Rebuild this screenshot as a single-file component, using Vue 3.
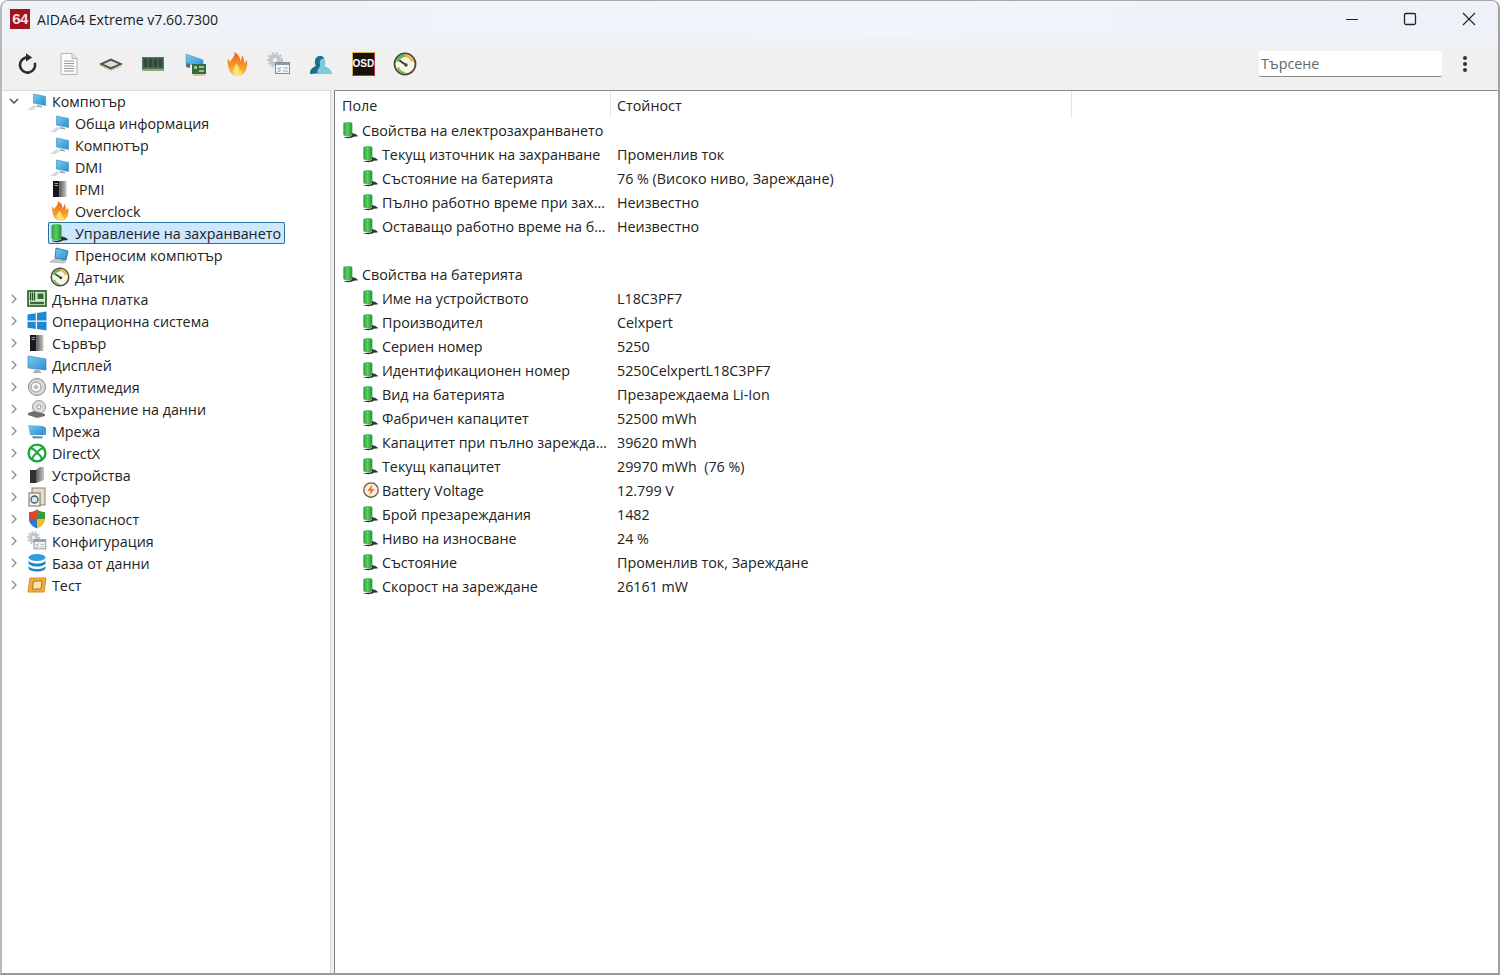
<script setup>
const tools = ['refresh', 'doc', 'chip', 'ram', 'card', 'fire', 'cfg', 'user', 'osd', 'gauge']

const sub = [
  { label: 'Обща информация', icon: 'pc' },
  { label: 'Компютър', icon: 'pc' },
  { label: 'DMI', icon: 'pc' },
  { label: 'IPMI', icon: 'server' },
  { label: 'Overclock', icon: 'fire' },
  { label: 'Управление на захранването', icon: 'batt', selected: true },
  { label: 'Преносим компютър', icon: 'laptop' },
  { label: 'Датчик', icon: 'gauge' }
]

const top = [
  { label: 'Дънна платка', icon: 'board' },
  { label: 'Операционна система', icon: 'win' },
  { label: 'Сървър', icon: 'server' },
  { label: 'Дисплей', icon: 'display' },
  { label: 'Мултимедия', icon: 'media' },
  { label: 'Съхранение на данни', icon: 'disk' },
  { label: 'Мрежа', icon: 'net' },
  { label: 'DirectX', icon: 'xbox' },
  { label: 'Устройства', icon: 'device' },
  { label: 'Софтуер', icon: 'soft' },
  { label: 'Безопасност', icon: 'shield' },
  { label: 'Конфигурация', icon: 'cfg' },
  { label: 'База от данни', icon: 'db' },
  { label: 'Тест', icon: 'test' }
]

const rows = [
  { field: 'Свойства на електрозахранването', group: true },
  { field: 'Текущ източник на захранване', value: 'Променлив ток' },
  { field: 'Състояние на батерията', value: '76 % (Високо ниво, Зареждане)' },
  { field: 'Пълно работно време при зах…', value: 'Неизвестно' },
  { field: 'Оставащо работно време на б…', value: 'Неизвестно' },
  { spacer: true },
  { field: 'Свойства на батерията', group: true },
  { field: 'Име на устройството', value: 'L18C3PF7' },
  { field: 'Производител', value: 'Celxpert' },
  { field: 'Сериен номер', value: '5250' },
  { field: 'Идентификационен номер', value: '5250CelxpertL18C3PF7' },
  { field: 'Вид на батерията', value: 'Презареждаема Li-Ion' },
  { field: 'Фабричен капацитет', value: '52500 mWh' },
  { field: 'Капацитет при пълно зарежда…', value: '39620 mWh' },
  { field: 'Текущ капацитет', value: '29970 mWh  (76 %)' },
  { field: 'Battery Voltage', value: '12.799 V', icon: 'volt' },
  { field: 'Брой презареждания', value: '1482' },
  { field: 'Ниво на износване', value: '24 %' },
  { field: 'Състояние', value: 'Променлив ток, Зареждане' },
  { field: 'Скорост на зареждане', value: '26161 mW' }
]
</script>

<template>
  <div class="window">
    <svg class="defs" aria-hidden="true">
      <defs>
        <linearGradient id="gGreen" x1="0" x2="1" y1="0" y2="0">
          <stop offset="0" stop-color="#2c9a42" />
          <stop offset=".45" stop-color="#5ccf58" />
          <stop offset="1" stop-color="#22903c" />
        </linearGradient>
        <linearGradient id="gBlue" x1="0" x2="1" y1="0" y2="1">
          <stop offset="0" stop-color="#78ccf4" />
          <stop offset="1" stop-color="#2a8fd0" />
        </linearGradient>
        <linearGradient id="gFire" x1="0" x2="0" y1="0" y2="1">
          <stop offset="0" stop-color="#e8601f" />
          <stop offset=".6" stop-color="#f79a28" />
          <stop offset="1" stop-color="#ffc648" />
        </linearGradient>
        <linearGradient id="gGrey" x1="0" x2="1" y1="0" y2="0">
          <stop offset="0" stop-color="#5a5a5a" />
          <stop offset="1" stop-color="#c9c9c9" />
        </linearGradient>
      </defs>
      <symbol id="refresh" viewBox="0 0 24 24">
        <path d="M12.6 5.4a7.6 7.6 0 1 0 7.2 5.4" fill="none" stroke="#2b2b2b" stroke-width="2.6" />
        <path d="M11 1.2l6.2 4.2L11 9.6z" fill="#2b2b2b" />
      </symbol>
      <symbol id="doc" viewBox="0 0 24 24">
        <path d="M4 1.500h11l5 5v16H4z" fill="#fafafa" stroke="#b4b4b4" />
        <path d="M15 1.500v5h5" fill="#e4e4e4" stroke="#b4b4b4" />
        <path d="M7 9h10M7 11.500h10M7 14h10M7 16.500h10M7 19h10" stroke="#9a9a9a" />
      </symbol>
      <symbol id="chip" viewBox="0 0 24 24">
        <path d="M0 12L12 6.500 24 12 12 17.500z" fill="#3f5a46" />
        <path d="M4.500 12L12 8.700l7.500 3.300L12 15.300z" fill="#e2e0d2" />
        <path d="M1 13.500l11 5 11-5" fill="none" stroke="#8f8f74" stroke-dasharray="1 1" />
      </symbol>
      <symbol id="ram" viewBox="0 0 24 24">
        <rect x="1" y="5" width="22" height="14" fill="#4c7a5c" />
        <path d="M2.500 6.500h4v9h-4zM7.500 6.500h4v9h-4zM12.500 6.500h4v9h-4zM17.500 6.500h4v9h-4z" fill="#37463d" />
        <path d="M1 18h22" stroke="#a8b878" stroke-width="1.500" />
      </symbol>
      <symbol id="card" viewBox="0 0 24 24">
        <path d="M3 2l17 6v8L3 11z" fill="url(#gBlue)" stroke="#3a86b8" stroke-width=".5" />
        <path d="M3 11v4l4 1v-4z" fill="#5a6a7a" />
        <rect x="9" y="12" width="14" height="10" fill="#2f6f48" />
        <path d="M11 14h3v3h-3zM16 14h5v2h-5zM16 18h5v2h-5z" fill="#a6b87e" />
        <path d="M10 23h12" stroke="#d6b85c" stroke-width="1.500" />
      </symbol>
      <symbol id="fire" viewBox="0 0 24 24">
        <path d="M9 0c2 4-2 6-4 10-.5-1-1-2-2.500-3 .5 7 .5 16 9.500 17 8 0 11-7 10-16-1 1.500-2 2.500-3 3 .5-3-.5-5-2-8 0 3-1 5-2 6 .5-4-2-7-6-9z" fill="url(#gFire)" />
        <path d="M11 11c0 3-3 5-3 8 0 3 2 5 4.500 5s5-3 4-6c-.5 1-1 1.500-2 2 .5-3-1-6-3.500-9z" fill="#ffe27a" />
      </symbol>
      <symbol id="cfg" viewBox="0 0 24 24">
        <circle cx="8" cy="8" r="6" fill="#c2c4c8" />
        <circle cx="8" cy="8" r="7" fill="none" stroke="#c2c4c8" stroke-width="2" stroke-dasharray="2.200 2" />
        <circle cx="8" cy="8" r="2.200" fill="#eee" />
        <rect x="8.500" y="10.500" width="14" height="11" fill="#f6f8fa" stroke="#7d8a96" />
        <rect x="8.500" y="10.500" width="14" height="2.500" fill="#8b9aa8" />
        <path d="M10.500 16l1.300 1.300 2-2.300M10.500 20l1.300-.5 2-1.500" fill="none" stroke="#4aa0c8" />
        <path d="M16 16h5M16 19h5" stroke="#a0a8b0" />
      </symbol>
      <symbol id="user" viewBox="0 0 24 24">
        <path d="M1 22c0-6 4-7 6-8-2-3-1.500-10 4-10 6 0 6 7 4.500 10 2 1 6.500 2 7.500 8z" fill="#7ccbdd" />
        <path d="M9 21c-2-3 1.500-5 2-7 .5-2-1-3 0-5 .5-1.500 2-2.500 4-3-1-1.500-2.500-2-4-2-5.500 0-6 7-4 10-2 1-6 2-6 8z" fill="#16718a" />
      </symbol>
      <symbol id="gauge" viewBox="0 0 24 24">
        <circle cx="12" cy="12" r="10.500" fill="#fbf6e2" stroke="#4c4a3e" stroke-width="1.800" />
        <path d="M3 9a10 10 0 0 1 9-7v3a7 7 0 0 0-6 5z" fill="#5cb85c" />
        <path d="M12 2a10 10 0 0 1 9 7l-3 1a7 7 0 0 0-6-5z" fill="#e8b84c" />
        <path d="M4 16a9 9 0 0 0 8 6v-2a7 7 0 0 1-6-5z" fill="#70bc5c" />
        <path d="M6.500 8.500L13 13" stroke="#334" stroke-width="1.800" />
        <circle cx="13" cy="13" r="1.700" fill="#39424e" />
      </symbol>
      <symbol id="pc" viewBox="0 0 20 20">
        <path d="M0 19l6-4.500h5L6 19z" fill="#d8dadd" />
        <path d="M6.500 3l12 2.500v9l-12-2.500z" fill="url(#gBlue)" stroke="#3a86b8" stroke-width=".6" />
        <path d="M10 14l5 1v1.500l-5-.8z" fill="#9aa6b0" />
      </symbol>
      <symbol id="laptop" viewBox="0 0 20 20">
        <path d="M6 3l12 3-2 9-11-2z" fill="url(#gBlue)" stroke="#2b5f88" stroke-width=".8" />
        <path d="M0 17l4-3 12 2-2 2z" fill="#c8ccd2" stroke="#8a9098" stroke-width=".5" />
      </symbol>
      <symbol id="server" viewBox="0 0 20 20">
        <rect x="3" y="2" width="6.500" height="16" fill="#15181e" />
        <rect x="9.500" y="2" width="7" height="16" fill="url(#gGrey)" />
        <path d="M4.500 4.500h3.500M4.500 6.500h3.500" stroke="#7aa6d8" />
      </symbol>
      <symbol id="batt" viewBox="0 0 20 20">
        <path d="M11 13.500c3 0 6 1.500 7 3.500l-5 .5c-1.500 1-4 2-8 1.500-2-.3-3-1-3.500-1.500 3 .5 7 .5 9.500-1z" fill="#26362a" />
        <path d="M1.500 3Q1.500 1 6.500 1T11.500 3V15q0 2-5 2T1.500 15z" fill="url(#gGreen)" />
      </symbol>
      <symbol id="volt" viewBox="0 0 20 20">
        <circle cx="10" cy="10" r="8" fill="#fbf0de" stroke="#6c5a48" stroke-width="1.500" />
        <path d="M11.500 3.500L6 11h3.500L8 16.500 14 9h-3.500z" fill="#e8791e" />
      </symbol>
      <symbol id="board" viewBox="0 0 20 20">
        <rect x="1" y="2" width="18" height="15" fill="#dce8c8" stroke="#2f6e38" stroke-width="1.800" />
        <path d="M3.500 3.500v8M5.500 3.500v8M7.500 3.500v8" stroke="#24502c" stroke-width="1.300" />
        <rect x="10.500" y="4.500" width="6" height="5.500" fill="#2f6e38" />
        <path d="M3 14h14" stroke="#2f6e38" stroke-width="2.400" />
      </symbol>
      <symbol id="win" viewBox="0 0 20 20">
        <path d="M.5 3.500L8.800 2.200v7.300H.5zM10 2L19.500 .6v8.900H10zM.5 10.700h8.300v7.300L.5 16.800zM10 10.700h9.500v8.800L10 18.100z" fill="#1a8ad4" />
      </symbol>
      <symbol id="display" viewBox="0 0 20 20">
        <path d="M1 1l18 3v11L1 13z" fill="url(#gBlue)" stroke="#2a7ab0" stroke-width=".6" />
        <path d="M8 14.500l4 .5 3 3H6z" fill="#a8b0b8" />
      </symbol>
      <symbol id="media" viewBox="0 0 20 20">
        <circle cx="10" cy="10" r="8.500" fill="#d9d9d9" stroke="#8a8a8a" />
        <circle cx="9" cy="10" r="5" fill="#f6f6f6" stroke="#9a9a9a" />
        <circle cx="9" cy="10" r="2" fill="#b4b4b4" />
      </symbol>
      <symbol id="disk" viewBox="0 0 20 20">
        <circle cx="12" cy="8" r="6.500" fill="#dcdcdc" stroke="#9a9a9a" />
        <circle cx="12" cy="8" r="2" fill="#f8f8f8" stroke="#a0a0a0" />
        <path d="M1 14l6-2 11 3v2l-8 2-9-3z" fill="#6e6e6e" />
      </symbol>
      <symbol id="net" viewBox="0 0 20 20">
        <path d="M1 4l15 1v9L3 14z" fill="url(#gBlue)" />
        <path d="M16 5l3 2v7l-3 0z" fill="#4a9ccc" />
        <path d="M5 15l11 .5-1 2H6z" fill="#7a8a96" />
      </symbol>
      <symbol id="xbox" viewBox="0 0 20 20">
        <circle cx="10" cy="10" r="8.400" fill="#fff" stroke="#19a83c" stroke-width="2.400" />
        <path d="M4 5Q8 6.500 10 9.500 12 6.500 16 5M5 16Q6 12.500 10 9.500 14 12.500 15 16" fill="none" stroke="#19a83c" stroke-width="2.100" />
      </symbol>
      <symbol id="device" viewBox="0 0 20 20">
        <rect x="3" y="5" width="6" height="13" fill="#30302e" />
        <path d="M9 5l4-3h4v13l-8 3z" fill="url(#gGrey)" />
      </symbol>
      <symbol id="soft" viewBox="0 0 20 20">
        <rect x="5" y="1" width="13" height="17" fill="#e6dcc2" stroke="#8a8470" />
        <rect x="2" y="6" width="11" height="13" fill="#f4f4f4" stroke="#6a6a6a" />
        <circle cx="7.500" cy="12.500" r="3.500" fill="#dfe6ec" stroke="#465564" stroke-width="1.300" />
      </symbol>
      <symbol id="shield" viewBox="0 0 20 20">
        <path d="M10 .5C7 2.500 4.500 3 2 3v7h8z" fill="#d94a2a" />
        <path d="M10 .5c3 2 5.500 2.500 8 2.500v7h-8z" fill="#3a9a3e" />
        <path d="M2 10h8v9.500C5 17.500 2 14 2 10z" fill="#2a7ad0" />
        <path d="M10 10h8c0 4-3 7.500-8 9.500z" fill="#f0c02a" />
      </symbol>
      <symbol id="db" viewBox="0 0 20 20">
        <ellipse cx="10" cy="4.500" rx="8.500" ry="3.500" fill="#2f9edc" />
        <path d="M1.500 7c0 2 4 3.500 8.500 3.500S18.500 9 18.500 7v3c0 2-4 3.500-8.500 3.500S1.500 12 1.500 10z" fill="#1f86c6" />
        <path d="M1.500 12.500c0 2 4 3.500 8.500 3.500s8.500-1.500 8.500-3.500v2.500c0 2-4 3.500-8.500 3.500S1.500 17 1.500 15z" fill="#1f86c6" />
      </symbol>
      <symbol id="test" viewBox="0 0 20 20">
        <path d="M3 3h16l-2 14H1z" fill="#f4ac3c" stroke="#d88a1e" />
        <path d="M6.500 6h8.500l-1 8H5.500z" fill="#fbe6a8" stroke="#a87420" />
      </symbol>
    </svg>

    <header class="titlebar">
      <div class="logo">64</div>
      <span class="title">AIDA64 Extreme v7.60.7300</span>
      <div class="winbtns">
        <svg class="winbtn" viewBox="0 0 58 36"><path d="M22 18.500h12" stroke="#222" stroke-width="1.100" /></svg>
        <svg class="winbtn" viewBox="0 0 58 36"><rect x="22.500" y="12.500" width="11" height="11" rx="1.500" fill="none" stroke="#222" stroke-width="1.300" /></svg>
        <svg class="winbtn" viewBox="0 0 58 36"><path d="M23 12l12 12M35 12L23 24" stroke="#222" stroke-width="1.100" /></svg>
      </div>
    </header>

    <div class="toolbar">
      <div v-for="t in tools" :key="t" class="tool">
        <div v-if="t === 'osd'" class="osd">OSD</div>
        <svg v-else class="toolicon"><use :href="'#' + t" /></svg>
      </div>
      <input class="search" placeholder="Търсене" />
      <div class="kebab"><i></i><i></i><i></i></div>
    </div>

    <main class="body">
      <nav class="tree">
        <div class="node">
          <svg class="chev" viewBox="0 0 10 10"><path d="M1 3l4 4 4-4" fill="none" stroke="#444" stroke-width="1.300" /></svg>
          <svg class="ticon"><use href="#pc" /></svg>
          <span class="nlabel">Компютър</span>
        </div>
        <div v-for="n in sub" :key="n.label" class="node child" :class="{ selected: n.selected }">
          <svg class="ticon"><use :href="'#' + n.icon" /></svg>
          <span class="nlabel">{{ n.label }}</span>
        </div>
        <div v-for="n in top" :key="n.label" class="node">
          <svg class="chev" viewBox="0 0 10 10"><path d="M3 1l4 4-4 4" fill="none" stroke="#8a8a8a" stroke-width="1.300" /></svg>
          <svg class="ticon"><use :href="'#' + n.icon" /></svg>
          <span class="nlabel">{{ n.label }}</span>
        </div>
      </nav>

      <section class="list">
        <div class="head">
          <div class="col c1">Поле</div>
          <div class="col c2">Стойност</div>
        </div>
        <div class="rows">
          <template v-for="(r, i) in rows" :key="i">
            <div v-if="r.spacer" class="row"></div>
            <div v-else class="row" :class="{ group: r.group }">
              <div class="field">
                <svg class="licon"><use :href="'#' + (r.icon || 'batt')" /></svg>
                <span>{{ r.field }}</span>
              </div>
              <div class="value">{{ r.value }}</div>
            </div>
          </template>
        </div>
      </section>
    </main>
  </div>
</template>

<style scoped>
.window {
  width: 1500px;
  height: 975px;
  box-sizing: border-box;
  border-style: solid;
  border-width: 1px 2px 2px 2px;
  border-color: #a8a8a8 #a0a0a0 #999 #b8b8b8;
  border-radius: 8px 8px 0 0;
  display: flex;
  flex-direction: column;
  overflow: hidden;
  background: #f0f0f0;
  color: #222;
  font-family: "Open Sans", "Noto Sans", sans-serif;
  font-size: 14.3px;
}
.defs {
  display: block;
  width: 0;
  height: 0;
}
.titlebar {
  height: 36px;
  flex: none;
  display: flex;
  align-items: center;
  padding-left: 8px;
  background: linear-gradient(90deg, #eef3fa, #f0f4fb 60%, #eef1f8);
}
.logo {
  width: 20px;
  height: 20px;
  background: #a3121c;
  color: #f4e4e0;
  font: 700 15px/20px "Liberation Sans", sans-serif;
  text-align: center;
  letter-spacing: -0.5px;
}
.title {
  margin-left: 7px;
  font-size: 14.1px;
  color: #1c1c1c;
}
.winbtns {
  margin-left: auto;
  display: flex;
}
.winbtn {
  width: 58px;
  height: 36px;
  display: block;
}
.toolbar {
  height: 53px;
  flex: none;
  display: flex;
  align-items: center;
  padding: 1px 10px 0 4px;
  background: linear-gradient(#eff2f8, #f0f0f0 30%);
  box-sizing: border-box;
}
.tool {
  width: 42px;
  display: flex;
  justify-content: center;
}
.toolicon {
  width: 24px;
  height: 24px;
  display: block;
}
.osd {
  width: 23px;
  height: 24px;
  box-sizing: border-box;
  background: #17120f;
  border: 1px solid #d8b44c;
  border-right-color: #b0354a;
  border-bottom-color: #b0354a;
  color: #fff;
  font: 700 10px/22px "Liberation Sans", sans-serif;
  text-align: center;
}
.search {
  margin-left: auto;
  width: 183px;
  height: 26px;
  box-sizing: border-box;
  border: 0;
  border-bottom: 1px solid #8a8a8a;
  border-radius: 2px;
  padding: 0 2px;
  background: #fff;
  font: inherit;
  outline: none;
}
.search::placeholder {
  color: #666;
  opacity: 1;
}
.kebab {
  width: 46px;
  display: flex;
  flex-direction: column;
  align-items: center;
  gap: 2px;
}
.kebab i {
  width: 4px;
  height: 4px;
  border-radius: 50%;
  background: #333;
}
.body {
  flex: 1;
  min-height: 0;
  display: flex;
  gap: 3px;
}
.tree {
  width: 329px;
  flex: none;
  background: #fff;
  border-right: 1px solid #d8d8d8;
  box-shadow: inset 0 1px 0 #dcdcdc;
  box-sizing: border-box;
}
.node {
  height: 22px;
  display: flex;
  align-items: center;
  padding-left: 7px;
}
.node.child {
  padding-left: 45px;
  width: 237px;
  box-sizing: border-box;
}
.node.selected {
  margin-left: 46px;
  padding-left: 2px;
  background: #cce8ff;
  box-shadow: inset 0 0 0 1px #2b6f9f;
  border-radius: 2px;
}
.chev {
  width: 10px;
  height: 10px;
  flex: none;
}
.ticon {
  width: 20px;
  height: 20px;
  flex: none;
  margin-left: 8px;
}
.child .ticon {
  margin-left: 3px;
}
.selected .ticon {
  margin-left: 0;
}
.nlabel {
  margin-left: 5px;
  white-space: nowrap;
}
.list {
  flex: 1;
  min-width: 0;
  background: #fff;
  border-left: 1px solid #7f7f7f;
  border-top: 1px solid #8a8a8a;
}
.head {
  height: 27px;
  display: flex;
}
.col {
  box-sizing: border-box;
  padding: 3px 0 0 7px;
  border-right: 1px solid #e5e5e5;
  line-height: 24px;
}
.c1 {
  width: 276px;
}
.c2 {
  width: 461px;
  padding-left: 6px;
}
.rows {
  display: flex;
  flex-direction: column;
}
.row {
  height: 24px;
  display: flex;
  align-items: center;
}
.field {
  width: 275px;
  flex: none;
  display: flex;
  align-items: center;
  padding-left: 27px;
  box-sizing: border-box;
  white-space: nowrap;
}
.group .field {
  padding-left: 7px;
}
.licon {
  width: 18px;
  height: 18px;
  flex: none;
  margin-right: 2px;
}
.value {
  padding-left: 7px;
  white-space: pre;
}
</style>

<style>
html, body {
  margin: 0;
  overflow: hidden;
  background: #fff;
}
</style>
